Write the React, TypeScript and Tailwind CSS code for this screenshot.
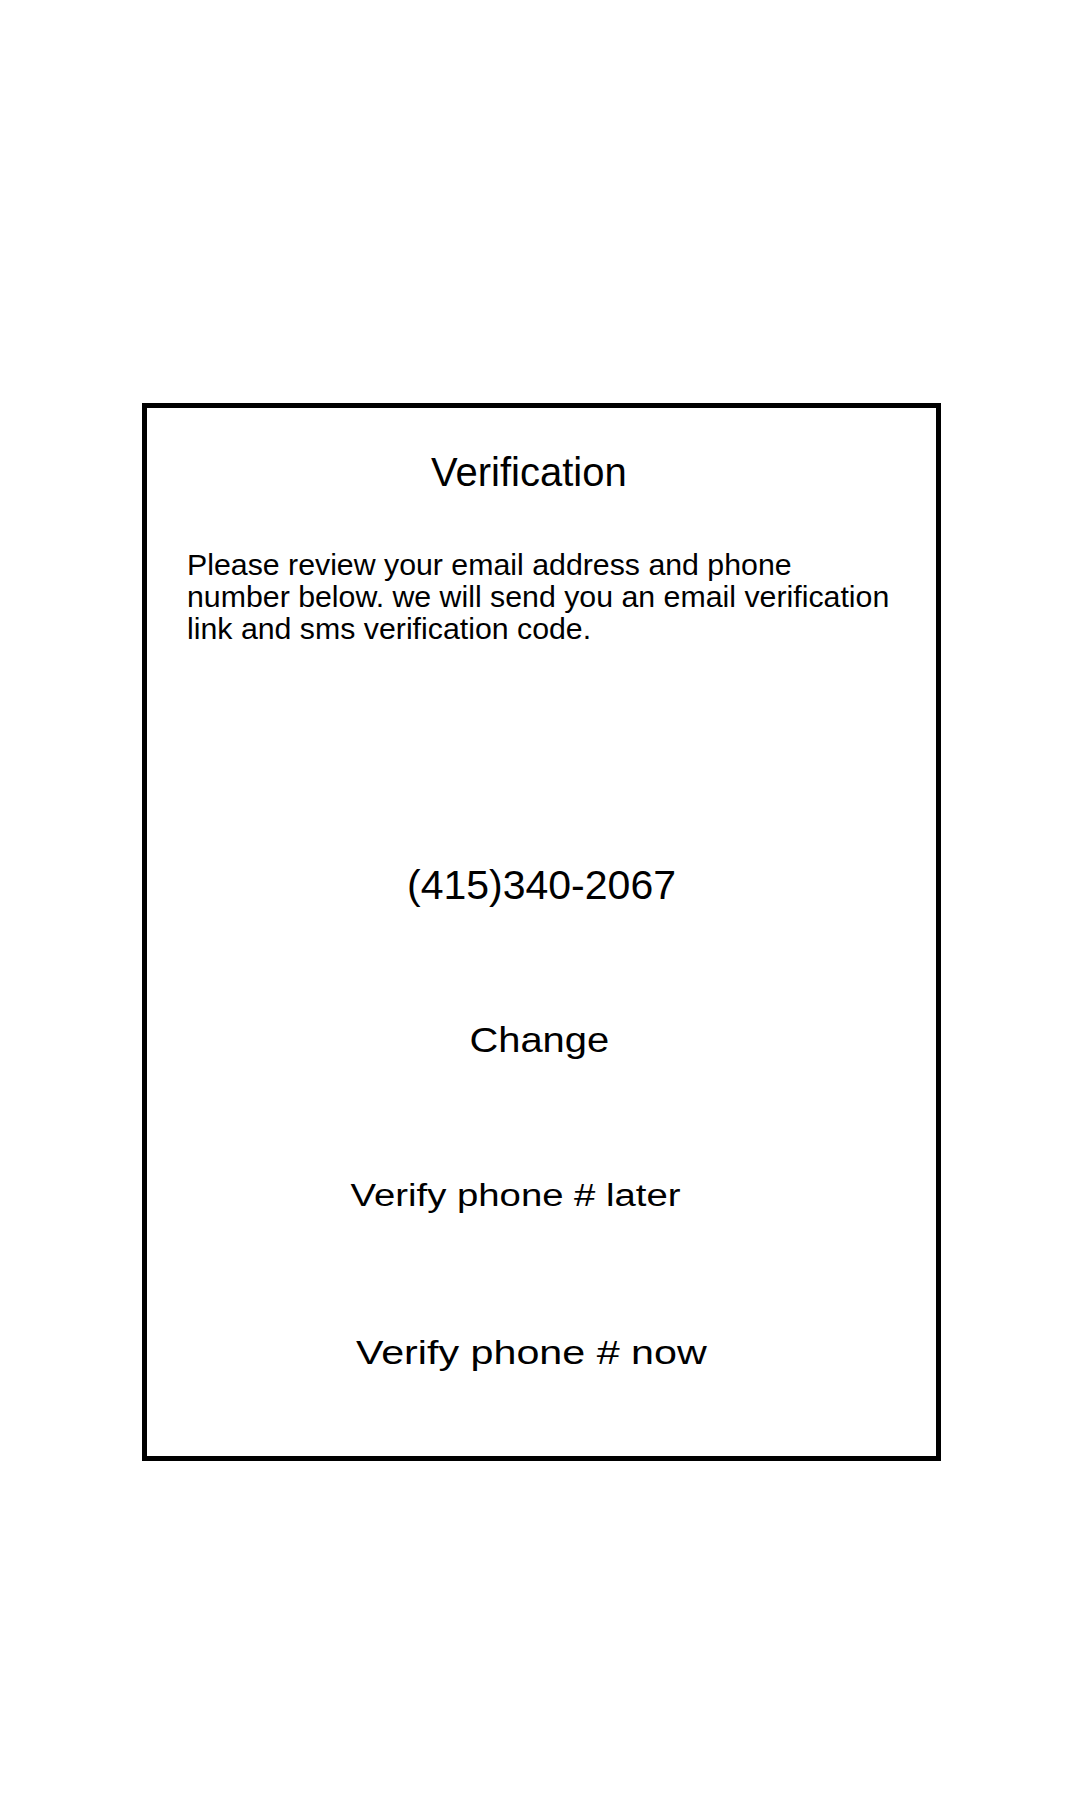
import React from "react";

export default function App() {
  return (
    <div className="min-h-[1800px] w-[1080px] bg-white text-black font-['Liberation_Sans',Arial,sans-serif]">
      <div className="pt-[403px] pl-[142px]">
        <div className="flex h-[1058px] w-[799px] flex-col border-[5px] border-black pt-[44px]">
          <h1 className="ml-[284px] text-[40px] leading-[40px] font-normal">Verification</h1>
          <p className="mt-[57px] ml-[40px] w-[709px] text-[30.3px] leading-[32px]">
            Please review your email address and phone number below. we will send you an email verification link and sms verification code.
          </p>
          <div className="mt-[220px] text-center text-[41px] leading-[41px]">(415)340-2067</div>
          <div className="mt-[116px] pr-[5px] text-center text-[35px] leading-[35px]">
            <span className="inline-block scale-x-[1.14]">Change</span>
          </div>
          <div className="mt-[123px] pr-[51px] text-center text-[31px] leading-[31px]">
            <span className="inline-block scale-x-[1.235]">Verify phone # later</span>
          </div>
          <div className="mt-[125px] pr-[21px] text-center text-[33px] leading-[33px]">
            <span className="inline-block scale-x-[1.25]">Verify phone # now</span>
          </div>
        </div>
      </div>
    </div>
  );
}
